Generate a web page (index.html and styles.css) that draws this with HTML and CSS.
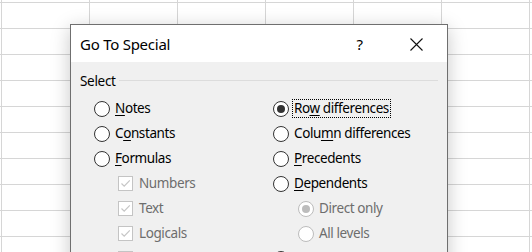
FILE: index.html
```html
<!DOCTYPE html>
<html lang="en">
	<head>
		<meta charset="UTF-8" />
		<title>Go To Special</title>
		<link rel="stylesheet" href="styles.css">
	</head>
	<body>
		<div class="sheet">
			<div class="dialog">
				<div class="titlebar">
					<span class="title">Go To Special</span>
					<span class="help">?</span>
					<span class="close">
						<svg width="13" height="13" viewBox="0 0 13 13">
							<path d="M0.5 0.5 L12.5 12.5 M12.5 0.5 L0.5 12.5" stroke="#111" stroke-width="1.1" fill="none" />
						</svg>
					</span>
				</div>

				<div class="content">
					<div class="group-head">
						<span class="group-name">Select</span>
						<span class="rule"></span>
					</div>

					<div class="columns">
						<div class="col">
							<div class="opt"><span class="radio"></span><span class="label"><u>N</u>otes</span></div>
							<div class="opt"><span class="radio"></span><span class="label">C<u>o</u>nstants</span></div>
							<div class="opt"><span class="radio"></span><span class="label"><u>F</u>ormulas</span></div>
							<div class="opt sub disabled"><span class="check"><svg width="13" height="13" viewBox="0 0 13 13"><path d="M2.5 6.5 L5.2 9.2 L10.8 3.3" stroke="#c6c6c6" stroke-width="1.2" fill="none" /></svg></span><span class="label">Numbers</span></div>
							<div class="opt sub disabled"><span class="check"><svg width="13" height="13" viewBox="0 0 13 13"><path d="M2.5 6.5 L5.2 9.2 L10.8 3.3" stroke="#c6c6c6" stroke-width="1.2" fill="none" /></svg></span><span class="label">Text</span></div>
							<div class="opt sub disabled"><span class="check"><svg width="13" height="13" viewBox="0 0 13 13"><path d="M2.5 6.5 L5.2 9.2 L10.8 3.3" stroke="#c6c6c6" stroke-width="1.2" fill="none" /></svg></span><span class="label">Logicals</span></div>
							<!-- next row is below the fold, only its box shows -->
							<div class="opt sub disabled"><span class="check"></span></div>
						</div>

						<div class="col">
							<div class="opt selected"><span class="radio"></span><span class="label focus">Ro<u>w</u> differences</span></div>
							<div class="opt"><span class="radio"></span><span class="label">Colu<u>m</u>n differences</span></div>
							<div class="opt"><span class="radio"></span><span class="label"><u>P</u>recedents</span></div>
							<div class="opt"><span class="radio"></span><span class="label"><u>D</u>ependents</span></div>
							<div class="opt sub disabled selected"><span class="radio"></span><span class="label">Direct only</span></div>
							<div class="opt sub disabled"><span class="radio"></span><span class="label">All levels</span></div>
							<div class="opt"><span class="radio"></span></div>
						</div>
					</div>
				</div>
			</div>
		</div>
	</body>
</html>
```

FILE: styles.css
```css
* {
	margin: 0;
	padding: 0;
	box-sizing: border-box;
}

body {
	font-family: 'Noto Sans', 'Open Sans', sans-serif;
	color: #000;
	background: #fff;
}

/* spreadsheet grid behind the dialog */
.sheet {
	position: relative;
	width: 532px;
	height: 252px;
	overflow: hidden;
	background-color: #fff;
	background-image:
		linear-gradient(to right, #d6d6d6 1px, transparent 1px),
		linear-gradient(to bottom, #d6d6d6 1px, transparent 1px);
	background-size: 88px 26px;
	background-position: 1px 2px;
}

.dialog {
	position: absolute;
	left: 70px;
	top: 24px;
	width: 378px;
	height: 300px;
	border: 1px solid #6f6f6f;
	background: #f0f0f0;
	box-shadow: 0 4px 18px rgba(0, 0, 0, 0.22);
}

.titlebar {
	height: 37px;
	background: #fff;
	display: flex;
	align-items: center;
	padding: 0 24px 0 9px;
}

.title {
	flex: 1;
	font-size: 15px;
	letter-spacing: -0.25px;
}

.help {
	font-size: 15px;
	margin-right: 47px;
}

.close {
	display: flex;
	margin-top: 1px;
}

.content {
	padding: 9px 9px 0 9px;
}

.group-head {
	display: flex;
	align-items: center;
	height: 20px;
	font-size: 13.5px;
	letter-spacing: -0.3px;
}

.rule {
	flex: 1;
	height: 1px;
	background: #dcdcdc;
	margin: -2px 0 0 3px;
}

.columns {
	display: grid;
	grid-template-columns: 179px 1fr;
	padding-left: 14px;
	margin-top: 5px;
}

.opt {
	display: flex;
	align-items: center;
	height: 25px;
	font-size: 13.5px;
	letter-spacing: -0.4px;
}

.opt.sub {
	padding-left: 24px;
}

.col + .col .opt.sub {
	padding-left: 25px;
}

.radio {
	position: relative;
	width: 16px;
	height: 16px;
	border: 1px solid #333;
	border-radius: 50%;
	background: #fff;
	flex-shrink: 0;
}

.selected .radio:after {
	content: '';
	position: absolute;
	left: 3px;
	top: 3px;
	width: 8px;
	height: 8px;
	border-radius: 50%;
	background: #333;
}

.disabled .radio {
	border-color: #bcbcbc;
}

.disabled.selected .radio:after {
	background: #bcbcbc;
}

.check {
	display: flex;
	align-items: center;
	justify-content: center;
	width: 15px;
	height: 15px;
	border: 1px solid #c4c4c4;
	background: #fff;
	flex-shrink: 0;
}

.label {
	margin-left: 3px;
	padding: 0 1px;
	border: 1px dotted transparent;
	line-height: 17px;
}

.check + .label {
	margin-left: 4px;
}

.label.focus {
	border-color: #000;
}

.disabled .label {
	color: #6d6d6d;
}

u {
	text-underline-offset: 2px;
}
```
